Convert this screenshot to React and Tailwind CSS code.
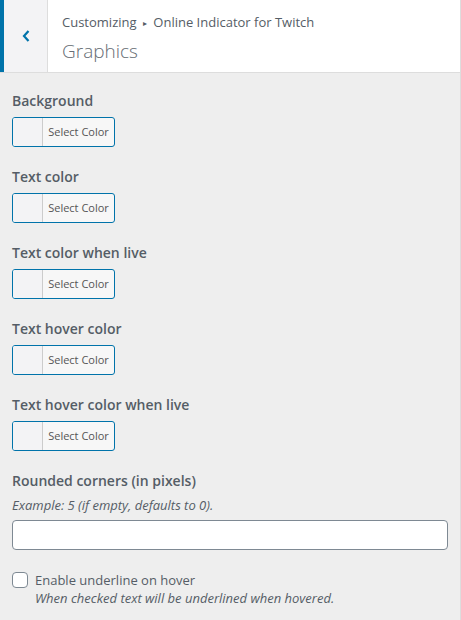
import React from "react";

const font = { fontFamily: '"Segoe UI", "Open Sans", "Noto Sans", sans-serif' };

function ColorField({ label }) {
  return (
    <div className="flex flex-col">
      <div className="text-[14px] font-semibold text-[#555d66] leading-[20px]">{label}</div>
      <div className="mt-[6px] flex h-[30px] w-[103px] rounded-[3px] border border-[#0073aa] bg-[#f7f7f7] overflow-hidden">
        <div className="w-[30px] border-r border-[#ccc] bg-[#f3f3f5]"></div>
        <div className="flex flex-1 items-center justify-center text-[11px] text-[#555]">Select Color</div>
      </div>
    </div>
  );
}

export default function App() {
  return (
    <div style={font} className="w-[461px] h-[620px] bg-[#eeeeee] border-r border-[#dddddd] flex flex-col">
      <div className="flex h-[73px] border-b border-[#dddddd] bg-white">
        <div className="w-[4px] bg-[#0073aa]"></div>
        <div className="w-[44px] bg-[#f3f3f5] border-r border-[#dddddd] flex items-center justify-center">
          <svg width="10" height="14" viewBox="0 0 10 14">
            <path d="M7.5 2 L3 7 L7.5 12" fill="none" stroke="#0073aa" strokeWidth="2.2" />
          </svg>
        </div>
        <div className="flex flex-col pl-[14px] pt-[13px]">
          <div className="text-[13px] leading-[18px] text-[#555d66]">
            Customizing <span className="text-[8px] align-[1px] mx-[3px]">▸</span> Online Indicator for Twitch
          </div>
          <div className="mt-[7px] text-[19px] font-light leading-[24px] text-[#666d73]">Graphics</div>
        </div>
      </div>
      <div className="flex flex-col px-[12px] pt-[18px] gap-[20px]">
        <ColorField label="Background" />
        <ColorField label="Text color" />
        <ColorField label="Text color when live" />
        <ColorField label="Text hover color" />
        <ColorField label="Text hover color when live" />
      </div>
      <div className="flex flex-col px-[12px] mt-[20px]">
        <div className="text-[14px] font-semibold text-[#555d66] leading-[20px]">Rounded corners (in pixels)</div>
        <div className="mt-[5px] text-[13px] italic text-[#555d66] leading-[18px]">Example: 5 (if empty, defaults to 0).</div>
        <div className="mt-[6px] h-[30px] w-[436px] rounded-[4px] border border-[#7e8993] bg-white"></div>
        <div className="mt-[21px] flex gap-[7px]">
          <div className="mt-[1px] h-[16px] w-[16px] rounded-[4px] border border-[#7e8993] bg-white shrink-0"></div>
          <div className="flex flex-col">
            <div className="text-[13px] text-[#555d66] leading-[18px]">Enable underline on hover</div>
            <div className="text-[13px] italic text-[#555d66] leading-[18px]">When checked text will be underlined when hovered.</div>
          </div>
        </div>
      </div>
    </div>
  );
}
